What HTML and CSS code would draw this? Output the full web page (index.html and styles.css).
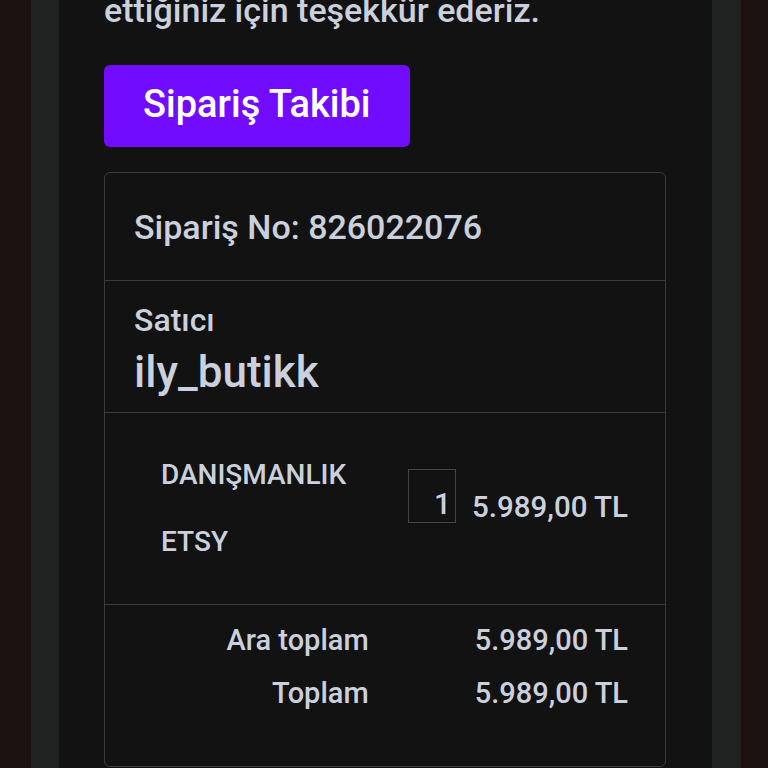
FILE: index.html
```html
<!DOCTYPE html>
<html lang="tr">
<head>
    <meta charset="UTF-8">
    <meta name="viewport" content="width=device-width, initial-scale=1.0">
    <title>Sipariş Onayı</title>
    <link rel="stylesheet" href="styles.css">
</head>
<body>
    <div class="frame">
        <div class="content">
            <p class="thanks">ettiğiniz için teşekkür ederiz.</p>
            <button class="track-btn">Sipariş Takibi</button>

            <div class="order">
                <div class="order-row order-no">Sipariş No: 826022076</div>

                <div class="order-row seller">
                    <div class="seller-label">Satıcı</div>
                    <div class="seller-name">ily_butikk</div>
                </div>

                <div class="order-row item">
                    <div class="item-info">
                        <div>DANIŞMANLIK</div>
                        <div class="item-sub">ETSY</div>
                    </div>
                    <div class="qty">1</div>
                    <div class="price">5.989,00 TL</div>
                </div>

                <div class="order-row totals">
                    <span class="label">Ara toplam</span>
                    <span class="value">5.989,00 TL</span>
                    <span class="label">Toplam</span>
                    <span class="value">5.989,00 TL</span>
                </div>
            </div>
        </div>
    </div>
</body>
</html>
```

FILE: styles.css
```css
* {
    box-sizing: border-box;
}

body {
    margin: 0;
    height: 100vh;
    overflow: hidden;
    background-color: #1c1210;
    font-family: Roboto, "Noto Sans", sans-serif;
    font-weight: 500;
    color: #cbd1dc;
}

.frame {
    margin: 0 27px 0 31px;
    padding: 0 29px 0 28px;
    height: 100%;
    background-color: #1f2221;
}

.content {
    display: flow-root;
    height: 100%;
    padding: 0 46px 0 45px;
    background-color: #121212;
}

.thanks {
    margin: -10px 0 35px;
    font-size: 34px;
    line-height: 40px;
    white-space: nowrap;
}

.track-btn {
    height: 82px;
    padding: 0 39px 4px;
    border: none;
    border-radius: 6px;
    background-color: #720cff;
    color: #ffffff;
    font-family: inherit;
    font-weight: 500;
    font-size: 38px;
    line-height: 44px;
    cursor: pointer;
}

.order {
    margin-top: 25px;
    border: 1px solid #3b3b3b;
    border-radius: 6px;
}

.order-row {
    padding-left: 29px;
    padding-right: 37px;
    border-bottom: 1px solid #3b3b3b;
}

.order-row:last-child {
    border-bottom: none;
}

.order-no {
    padding-top: 34px;
    padding-bottom: 33px;
    font-size: 34px;
    line-height: 40px;
}

.seller {
    padding-top: 20px;
    padding-bottom: 14px;
}

.seller-label {
    font-size: 32px;
    line-height: 38px;
}

.seller-name {
    margin-top: 7px;
    font-size: 44px;
    line-height: 52px;
}

.item {
    display: flex;
    align-items: flex-start;
    padding-top: 45px;
    padding-bottom: 45px;
    padding-left: 56px;
}

.item-info {
    flex: 1;
    font-size: 28px;
    line-height: 34px;
}

.item-sub {
    margin-top: 33px;
}

.qty {
    width: 48px;
    height: 54px;
    margin-top: 11px;
    padding: 16px 4px 0 0;
    border: 1px solid #444444;
    text-align: right;
    font-size: 30px;
    line-height: 36px;
}

.price {
    margin-left: 16px;
    margin-top: 32px;
    font-size: 29.5px;
    line-height: 35px;
}

.totals {
    display: grid;
    grid-template-columns: 1fr auto;
    column-gap: 106px;
    row-gap: 18px;
    padding-top: 18px;
    padding-bottom: 55px;
    font-size: 29px;
    line-height: 35px;
}

.totals .label {
    text-align: right;
}
```
